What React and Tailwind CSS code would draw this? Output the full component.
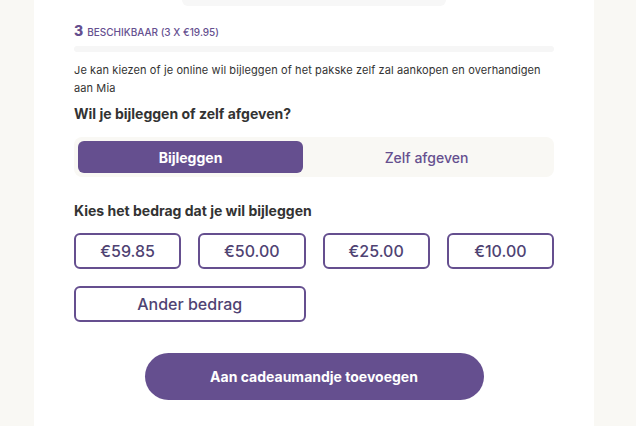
import React from 'react';

export default function App() {
  const amounts = ['€59.85', '€50.00', '€25.00', '€10.00'];

  return (
    <div className="min-h-[426px] w-full bg-[#f9f8f4] font-['Inter',sans-serif] text-[#333]">
      <div className="mx-[34px] w-[560px] bg-white min-h-[426px] px-10 pb-6">
        {/* bar from previous block */}
        <div className="flex">
          <div className="ml-[108px] h-[6px] w-[264px] rounded-b-md bg-[#f7f7f7]" />
        </div>

        {/* Availability */}
        <div className="mt-[14px] flex items-baseline gap-1 text-[#654f8f]">
          <span className="text-[14px] font-extrabold">3</span>
          <span className="text-[10px] font-medium uppercase">Beschikbaar (3 x €19.95)</span>
        </div>
        <div className="mt-[5px] h-[6px] w-full rounded-full bg-[#f6f6f6]" />

        <p className="mt-[9px] w-[472px] text-[11px] leading-[18px] tracking-[0.1px] text-[#333]">
          Je kan kiezen of je online wil bijleggen of het pakske zelf zal aankopen en overhandigen aan Mia
        </p>

        <h2 className="mt-[6px] text-[14px] font-bold text-[#333]">Wil je bijleggen of zelf afgeven?</h2>

        {/* Toggle */}
        <div className="mt-[13px] flex rounded-lg bg-[#f9f8f4] p-1">
          <button className="h-8 w-[225px] rounded-md bg-[#654f8f] text-[14px] font-bold text-white">
            Bijleggen
          </button>
          <button className="h-8 flex-1 rounded-md text-[14px] font-medium text-[#654f8f]">
            Zelf afgeven
          </button>
        </div>

        <h2 className="mt-[23px] text-[14px] font-bold text-[#333]">Kies het bedrag dat je wil bijleggen</h2>

        {/* Amounts */}
        <div className="mt-[12px] grid grid-cols-4 gap-x-[17px] gap-y-[17px]">
          {amounts.map((a) => (
            <button
              key={a}
              className="h-[36px] rounded-md border-2 border-[#654f8f] text-[16px] font-medium text-[#4f4373]"
            >
              {a}
            </button>
          ))}
          <button className="col-span-2 h-[36px] rounded-md border-2 border-[#654f8f] text-[16px] font-medium text-[#4f4373]">
            Ander bedrag
          </button>
        </div>

        {/* CTA */}
        <div className="mt-[31px] flex justify-center">
          <button className="h-[47px] w-[339px] rounded-full bg-[#654f8f] text-[14px] font-bold text-white">
            Aan cadeaumandje toevoegen
          </button>
        </div>
      </div>
    </div>
  );
}
